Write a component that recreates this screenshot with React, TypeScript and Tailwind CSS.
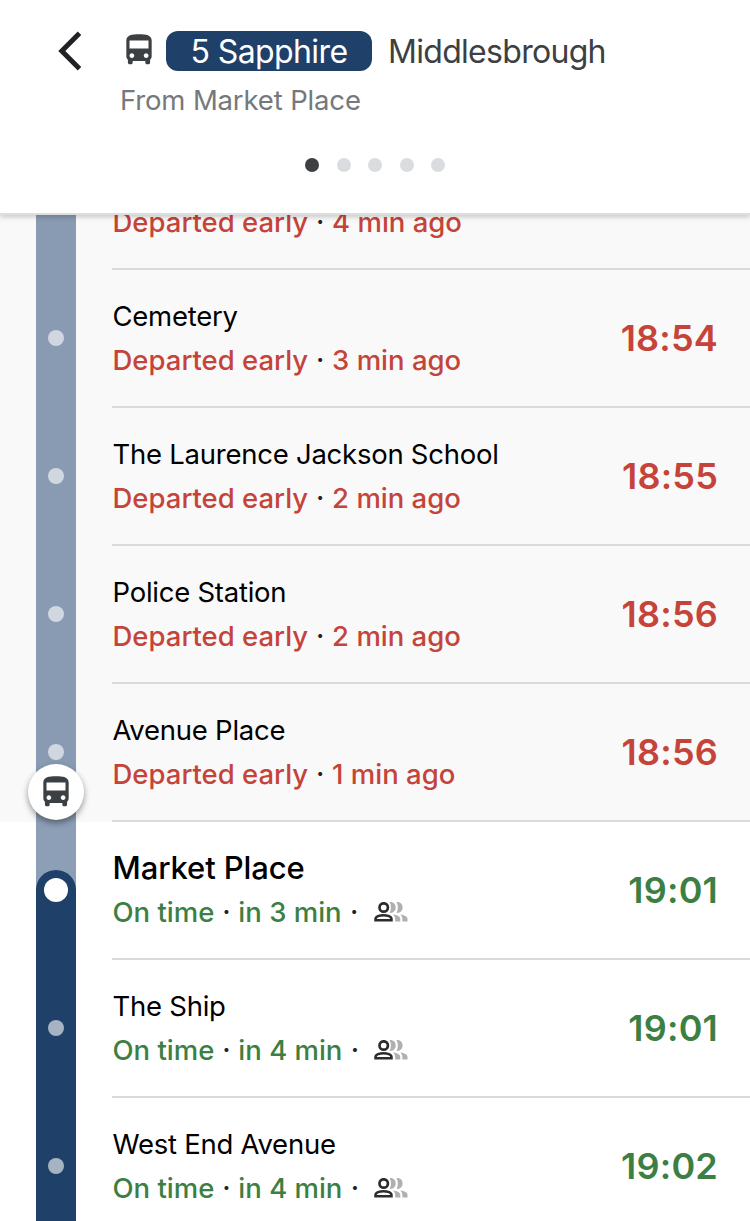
import React from 'react';

type StopStatus = 'early' | 'ontime';

interface Stop {
  name?: string;
  status: StopStatus;
  relative: string;
  time?: string;
  current?: boolean;
  busHere?: boolean;
}

// The first stop is scrolled under the header, only its status line is visible
const stops: Stop[] = [
  { status: 'early', relative: '4 min ago' },
  { name: 'Cemetery', status: 'early', relative: '3 min ago', time: '18:54' },
  { name: 'The Laurence Jackson School', status: 'early', relative: '2 min ago', time: '18:55' },
  { name: 'Police Station', status: 'early', relative: '2 min ago', time: '18:56' },
  { name: 'Avenue Place', status: 'early', relative: '1 min ago', time: '18:56', busHere: true },
  { name: 'Market Place', status: 'ontime', relative: 'in 3 min', time: '19:01', current: true },
  { name: 'The Ship', status: 'ontime', relative: 'in 4 min', time: '19:01' },
  { name: 'West End Avenue', status: 'ontime', relative: 'in 4 min', time: '19:02' },
];

const BusIcon = ({ className }: { className?: string }) => (
  <svg viewBox="0 0 24 24" fill="currentColor" className={className}>
    <path d="M4 16c0 .88.39 1.67 1 2.22V20c0 .55.45 1 1 1h1c.55 0 1-.45 1-1v-1h8v1c0 .55.45 1 1 1h1c.55 0 1-.45 1-1v-1.78c.61-.55 1-1.34 1-2.22V6c0-3.5-3.58-4-8-4s-8 .5-8 4v10zm3.500 1c-.83 0-1.500-.67-1.500-1.500S6.670 14 7.500 14s1.500.67 1.500 1.500S8.330 17 7.500 17zm9 0c-.83 0-1.500-.67-1.500-1.500s.67-1.500 1.500-1.500 1.500.67 1.500 1.500-.67 1.500-1.500 1.500zm1.500-6H6V6h12v5z" />
  </svg>
);

const OccupancyIcon = () => (
  <svg viewBox="0 0 34 20" className="h-5 w-[34px]" fill="none">
    <circle cx="9.700" cy="5.500" r="4.200" stroke="#2b2c2e" strokeWidth="2.700" />
    <path d="M1.500 18.300v-1.400c0-2.200 4.200-3.700 8-3.700s8 1.500 8 3.700v1.400z" stroke="#2b2c2e" strokeWidth="2.500" />
    <path d="M15.700.2c3.300-.6 6 1.900 6 5.300s-2.700 5.900-6 5.300c1.700-3.400 1.700-7.200 0-10.600z" fill="#b0b0b0" />
    <path d="M22.600.2c3.300-.6 6 1.900 6 5.300s-2.700 5.900-6 5.300c1.700-3.400 1.700-7.200 0-10.600z" fill="#b0b0b0" />
    <path d="M19 12.400c4 .4 7.300 2 7.300 4.500v2.600h-5.100v-2.600c0-1.800-.8-3.400-2.200-4.500z" fill="#b0b0b0" />
    <path d="M26.200 12.400c4 .4 7.300 2 7.300 4.500v2.600h-5.100v-2.600c0-1.800-.8-3.400-2.200-4.500z" fill="#b0b0b0" />
  </svg>
);

const Header = () => (
  <header className="relative z-20 h-[215px] border-b-2 border-[#dedede] bg-white shadow-[0_2px_5px_rgba(0,0,0,0.2)]">
    <div className="flex pt-[31px]">
      <svg viewBox="0 0 24 40" className="ml-[58px] h-10 w-6" fill="none" stroke="#202124" strokeWidth="5">
        <path d="M21.500 2.200 3.800 20l17.700 17.800" />
      </svg>
      <div className="ml-[38px]">
        <div className="flex h-10 items-center">
          <BusIcon className="mb-[3px] size-[38px] text-[#3c4043]" />
          <span className="ml-2 flex h-10 w-[206px] items-center justify-center rounded-[12px] bg-[#1f4068] pt-px text-[32px] tracking-[-0.6px] text-white">
            5 Sapphire
          </span>
          <span className="ml-4 pt-px text-[32px] tracking-[-0.7px] text-[#3c4043]">Middlesbrough</span>
        </div>
        <p className="mt-[7px] text-[27.500px] leading-[44px] tracking-[-0.15px] text-[#75787c]">From Market Place</p>
      </div>
    </div>
    <div className="mt-9 flex justify-center gap-[17.500px]">
      {[0, 1, 2, 3, 4].map((i) => (
        <span key={i} className={`size-3.5 rounded-full ${i === 0 ? 'bg-[#3c4043]' : 'bg-[#dadce0]'}`} />
      ))}
    </div>
  </header>
);

const Rail = ({ stop }: { stop: Stop }) => {
  if (stop.current) {
    return (
      <div className="h-full w-10 bg-[#8c9fb6] pt-12">
        <div className="flex h-[90px] justify-center rounded-t-full bg-[#1f4068] pt-2">
          <span className="size-6 rounded-full bg-white" />
        </div>
      </div>
    );
  }

  const passed = stop.status === 'early';
  return (
    <div className={`relative flex h-full w-10 justify-center pt-[60px] ${passed ? 'bg-[#899bb2]' : 'bg-[#1f4068]'}`}>
      <span className={`size-4 rounded-full ${passed ? 'bg-[#d0d7e0]' : 'bg-[#a5b3c3]'}`} />
      {stop.busHere && (
        <div className="absolute top-20 left-1/2 z-10 flex size-14 -translate-x-1/2 items-center justify-center rounded-full bg-white shadow-[0_3px_6px_rgba(0,0,0,0.4)]">
          <BusIcon className="size-[38px] text-[#3c4043]" />
        </div>
      )}
    </div>
  );
};

const StopRow = ({ stop }: { stop: Stop }) => {
  const early = stop.status === 'early';
  const color = early ? 'text-[#c5443a]' : 'text-[#3d7f42]';

  return (
    <li className={`flex h-[138px] pl-9 ${early ? 'bg-[#f9f9f9]' : 'bg-white'}`}>
      <Rail stop={stop} />
      <div className="ml-9 flex flex-1 justify-between border-b-2 border-[#dadada] pt-6 pr-[33px]">
        <div className="pl-[0.500px]">
          <h2
            className={`h-11 leading-[44px] text-black ${
              stop.current ? 'text-[31px] font-[450] tracking-[-0.1px]' : 'text-[27.500px] tracking-[-0.25px]'
            }`}
          >
            {stop.name}
          </h2>
          <p className={`flex items-center text-[27.500px] leading-[44px] font-medium ${color}`}>
            <span>{early ? 'Departed early' : 'On time'}</span>
            <span className="w-6 text-center text-[#202124]">·</span>
            <span>{stop.relative}</span>
            {!early && (
              <>
                <span className="mr-[7px] w-[25px] text-center text-[#202124]">·</span>
                <OccupancyIcon />
              </>
            )}
          </p>
        </div>
        {stop.time && (
          <span className={`-mr-px text-[36px] leading-[88px] font-semibold tracking-[0.2px] ${color}`}>
            {stop.time}
          </span>
        )}
      </div>
    </li>
  );
};

export default function App() {
  return (
    <div className="h-[1221px] w-[750px] overflow-hidden bg-white font-['Inter','Liberation_Sans',sans-serif]">
      <Header />
      <main className="h-[1006px] overflow-hidden">
        <ul className="-mt-[83px]">
          {stops.map((stop, i) => (
            <StopRow key={i} stop={stop} />
          ))}
        </ul>
      </main>
    </div>
  );
}
